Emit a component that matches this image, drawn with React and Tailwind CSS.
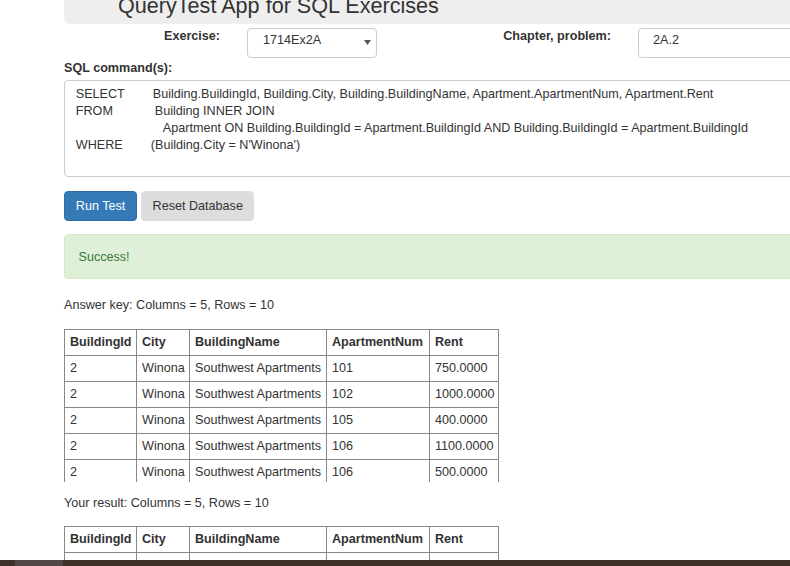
import React from "react";

const rows = [
  ["2", "Winona", "Southwest Apartments", "101", "750.0000"],
  ["2", "Winona", "Southwest Apartments", "102", "1000.0000"],
  ["2", "Winona", "Southwest Apartments", "105", "400.0000"],
  ["2", "Winona", "Southwest Apartments", "106", "1100.0000"],
  ["2", "Winona", "Southwest Apartments", "106", "500.0000"],
];

const headers = ["BuildingId", "City", "BuildingName", "ApartmentNum", "Rent"];

function ResultTable({ data }) {
  return (
    <table className="table-fixed border-collapse w-[434px]">
      <colgroup>
        <col className="w-[72px]" />
        <col className="w-[53px]" />
        <col className="w-[137px]" />
        <col className="w-[103px]" />
        <col className="w-[69px]" />
      </colgroup>
      <thead>
        <tr className="h-[26px]">
          {headers.map((h) => (
            <th
              key={h}
              className="border border-[#888] pl-[5px] pr-0 pb-px text-left font-bold align-middle whitespace-nowrap"
            >
              {h}
            </th>
          ))}
        </tr>
      </thead>
      <tbody>
        {data.map((r, i) => (
          <tr key={i} className="h-[26px]">
            {r.map((c, j) => (
              <td
                key={j}
                className="border border-[#888] pl-[5px] pr-0 pb-px align-middle whitespace-nowrap"
              >
                {c}
              </td>
            ))}
          </tr>
        ))}
      </tbody>
    </table>
  );
}

export default function App() {
  return (
    <div className="relative w-[790px] h-[566px] overflow-hidden bg-white text-[#333] text-[12.6px] leading-[18px] font-['Liberation_Sans',Arial,sans-serif]">
      <div className="pl-[64px] w-[1100px]">
        {/* Jumbotron */}
        <div className="flex items-start h-[24px] bg-[#eee] rounded-bl-[6px] pl-[54px]">
          <h1 className="mt-[-5px] text-[21.6px] leading-[21.6px] font-normal whitespace-nowrap">
            QueryTest App for SQL Exercises
          </h1>
        </div>

        {/* Form row */}
        <div className="flex items-start mt-[4px] h-[30px]">
          <div className="w-[156px] text-right font-bold -mt-px">Exercise:</div>
          <div className="ml-[27px] w-[130px] h-[30px] border border-[#ccc] rounded-[4px] flex items-start bg-white">
            <span className="pl-[15px] pt-[2px]">1714Ex2A</span>
            <svg
              className="ml-auto mr-[5px] mt-[11px]"
              width="7"
              height="5"
              viewBox="0 0 7 5"
            >
              <path d="M0 0 L7 0 L3.5 5 Z" fill="#555" />
            </svg>
          </div>
          <div className="w-[234px] text-right font-bold -mt-px">Chapter, problem:</div>
          <div className="ml-[27px] w-[200px] h-[30px] border border-[#ccc] rounded-[4px] flex items-start bg-white">
            <span className="pl-[14px] pt-[2px]">2A.2</span>
          </div>
        </div>

        {/* SQL label */}
        <div className="mt-px font-bold">SQL command(s):</div>

        {/* Textarea */}
        <div className="mt-[3px] w-[1000px] h-[97px] border border-[#ccc] rounded-[4px] px-[10.8px] py-[5.3px] leading-[17px] whitespace-nowrap">
          <div>
            <span className="inline-block w-[77px]">SELECT</span>
            Building.BuildingId, Building.City, Building.BuildingName, Apartment.ApartmentNum, Apartment.Rent
          </div>
          <div>
            <span className="inline-block w-[79px]">FROM</span>
            Building INNER JOIN
          </div>
          <div>
            <span className="inline-block w-[87px]"></span>
            Apartment ON Building.BuildingId = Apartment.BuildingId AND Building.BuildingId = Apartment.BuildingId
          </div>
          <div>
            <span className="inline-block w-[75px]">WHERE</span>
            (Building.City = N'Winona')
          </div>
        </div>

        {/* Buttons */}
        <div className="flex mt-[14px]">
          <button className="h-[30px] px-[10.8px] bg-[#337ab7] border border-[#2e6da4] text-white rounded-[4px] leading-[18px]">
            Run Test
          </button>
          <button className="ml-[4px] h-[30px] px-[10.5px] bg-[#ddd] border border-[#ddd] text-[#333] rounded-[4px] leading-[18px]">
            Reset Database
          </button>
        </div>

        {/* Alert */}
        <div className="mt-[13px] w-[1000px] h-[45px] bg-[#dff0d8] border border-[#d6e9c6] text-[#3c763d] rounded-[4px] px-[13.5px] py-[12.5px]">
          Success!
        </div>

        <div className="mt-[17px]">Answer key: Columns = 5, Rows = 10</div>

        <div className="mt-[15px] h-[153px] overflow-hidden w-[436px]">
          <ResultTable data={rows} />
        </div>

        <div className="mt-[12px]">Your result: Columns = 5, Rows = 10</div>

        <div className="mt-[14px] h-[34px] overflow-hidden w-[436px]">
          <ResultTable data={rows.slice(0, 1)} />
        </div>
      </div>

      {/* Bottom bar */}
      <div className="fixed bottom-0 left-0 right-0 h-[6px] bg-[#3e3129] flex">
        <div className="ml-[15px] w-[48px] h-full bg-[#4f4846]" />
      </div>
    </div>
  );
}
